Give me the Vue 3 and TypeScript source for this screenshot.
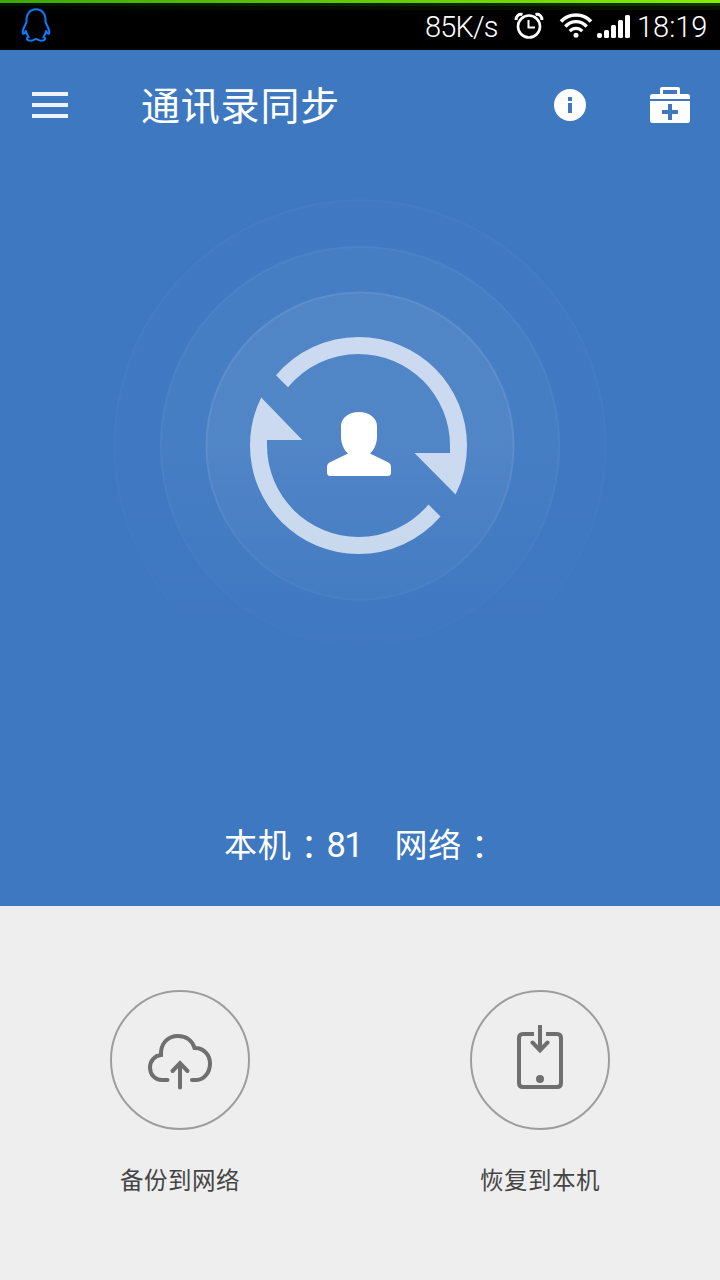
<script setup lang="ts">
interface Action {
  id: 'backup' | 'restore'
  label: string
}

const actions: Action[] = [
  { id: 'backup', label: '备份到网络' },
  { id: 'restore', label: '恢复到本机' },
]

const localCount = 81
</script>

<template>
  <div class="screen">
    <div class="statusbar">
      <svg class="penguin" width="30" height="34" viewBox="0 0 30 34">
        <path d="M5.500 13.500C5 6 9 1.200 15 1.200s10 4.800 9.500 12.300c.3 2 1.500 3.500 2.500 6c1.500 3.500 1.700 6 .8 6.300c-.9 .2-2-1.500-2.800-3.300c0 2.500-1 4.500-2.500 6.500c3 1.500 1.800 3.700-2.500 3.700c-2.500 0-3.500-1.700-5-1.700s-2.500 1.700-5 1.700c-4.300 0-5.500-2.200-2.500-3.700C6 27 5 25 5 22.500C4.200 24.300 3.100 26 2.200 25.800C1.300 25.500 1.500 23 3 19.500C4 17 5.200 15.500 5.500 13.500z" />
      </svg>
      <span class="speed">85K/s</span>
      <svg class="status-icons" width="117" height="28" viewBox="0 0 117 28">
        <g fill="none" stroke="#fff">
          <circle cx="15" cy="14.500" r="11" stroke-width="2.600" />
          <path d="M2 8C2 4 5 1.500 8.500 2.500M28 8C28 4 25 1.500 21.500 2.500" stroke-width="3" />
          <path d="M14.500 8v7.500h6.500" stroke-width="2" />
          <path d="M47 9.500C55 .8 69 .8 77 9.500" stroke-width="3.700" />
          <path d="M51.300 14.500C57.500 8 66.500 8 72.700 14.500" stroke-width="3.400" />
          <path d="M55.700 19.200C59.500 15.300 64.500 15.300 68.300 19.200" stroke-width="3.200" />
        </g>
        <g fill="#fff">
          <circle cx="62" cy="23.300" r="2.500" />
          <rect x="83" y="21" width="5" height="5" rx="2" />
          <rect x="90" y="18" width="5" height="8" rx="1.500" />
          <rect x="97" y="13" width="5" height="13" rx="1.500" />
          <rect x="104" y="8" width="5" height="18" rx="1.500" />
          <rect x="111" y="3" width="5" height="23" rx="1.500" />
        </g>
      </svg>
      <span class="time">18:19</span>
    </div>

    <main class="hero">
      <header class="toolbar">
        <div class="menu"><i /><i /><i /></div>
        <h1>通讯录同步</h1>
        <svg class="info" width="32" height="32" viewBox="0 0 32 32">
          <circle cx="16" cy="16" r="16" fill="#fff" />
          <path d="M14 8h4v4h-4zM14 14h4v10h-4z" fill="#3e78c1" />
        </svg>
        <svg class="kit" width="40" height="36" viewBox="0 0 40 36">
          <path d="M0 12V9.500Q0 7 2.500 7H10V2Q10 0 12 0H28Q30 0 30 2V7H37.500Q40 7 40 9.500V12zM13 3V7H27V3z" fill="#fff" fill-rule="evenodd" />
          <path d="M0 14H40V33.500Q40 36 37.500 36H2.500Q0 36 0 33.500zM18 17V23H12V27H18V33H22V27H28V23H22V17z" fill="#fff" fill-rule="evenodd" />
        </svg>
      </header>

      <svg class="sync" width="720" height="500" viewBox="0 196 720 500">
        <defs>
          <linearGradient id="fade" x1="0" y1="200" x2="0" y2="692" gradientUnits="userSpaceOnUse">
            <stop offset="0" stop-color="#fff" />
            <stop offset=".5" stop-color="#fff" />
            <stop offset=".82" stop-color="#fff" stop-opacity=".3" />
            <stop offset=".95" stop-color="#fff" stop-opacity="0" />
          </linearGradient>
          <linearGradient id="arrow" x1="0" y1="337" x2="0" y2="554" gradientUnits="userSpaceOnUse">
            <stop offset=".6" stop-color="#cbdaf0" />
            <stop offset="1" stop-color="#c8d9ed" />
          </linearGradient>
        </defs>
        <g fill="url(#fade)">
          <circle cx="360" cy="446" r="246.500" fill-opacity=".012" />
          <circle cx="360" cy="446" r="200" fill-opacity=".03" />
          <circle cx="360" cy="446" r="154.500" fill-opacity=".06" />
        </g>
        <g fill="none" stroke="url(#fade)" stroke-width="2">
          <circle cx="360" cy="446" r="245.500" stroke-opacity=".02" />
          <circle cx="360" cy="446" r="199" stroke-opacity=".035" />
          <circle cx="360" cy="446" r="153.500" stroke-opacity=".07" />
        </g>
        <g fill="url(#arrow)">
          <path d="M276 375.300A108.500 108.500 0 0 1 358.500 337A108.500 108.500 0 0 1 467 445.500A108.500 108.500 0 0 1 455.600 494.500L414.500 453H450V445.500A91.500 91.500 0 0 0 358.500 354A91.500 91.500 0 0 0 288 387.300z" />
          <path d="M440.500 516.500A108.500 108.500 0 0 1 358.500 554A108.500 108.500 0 0 1 250 445.500A108.500 108.500 0 0 1 261.200 397.500L302.300 440H267V445.500A91.500 91.500 0 0 0 358.500 537A91.500 91.500 0 0 0 428.500 504.500z" />
        </g>
        <path d="M341 426C341 418 349 412 359 412s18 6 18 14v10.500C377 444 374 450 370 453.500L388.500 462.500Q391 464 391 466.500V472.500Q391 476 387.500 476H330.500Q327 476 327 472.500V466.500Q327 464 329.500 462.500L348 453.500C344 450 341 444 341 436.500z" fill="#fff" />
      </svg>

      <div class="counts">
        <span>本机<b>：</b></span><span class="num">{{ localCount }}</span><span class="net">网络<b>：</b></span>
      </div>
    </main>

    <footer class="actions">
      <div v-for="action in actions" :key="action.id" class="action">
        <div class="disc">
          <svg v-if="action.id === 'backup'" width="70" height="70" viewBox="145 1025 70 70">
            <path d="M167.500 1080H162C155 1080 150 1074.500 150 1067.500C150 1060.500 155 1055.500 161 1055C160.500 1043 168 1036 178 1036C186.500 1036 192.500 1041 194.500 1048C203.500 1047.500 210 1055 210 1063.500C210 1073 203.500 1080 196.500 1080H192" />
            <path d="M180 1087.500V1063.500M172.500 1071L180 1063.200L187.500 1071" />
          </svg>
          <svg v-else width="70" height="70" viewBox="505 1025 70 70">
            <path class="butt" d="M534 1034H523Q519 1034 519 1038V1083Q519 1087 523 1087H557Q561 1087 561 1083V1038Q561 1034 557 1034H546" />
            <path d="M540 1026V1050M532.500 1042.500L540 1050.300L547.500 1042.500" />
            <circle cx="540" cy="1079" r="4" />
          </svg>
        </div>
        <span class="label">{{ action.label }}</span>
      </div>
    </footer>
  </div>
</template>

<style>
html,
body {
  margin: 0;
  overflow: hidden;
}
</style>

<style scoped>
.screen {
  width: 720px;
  height: 1280px;
  display: flex;
  flex-direction: column;
  background: #eee;
  font-family: 'Noto Sans CJK SC', sans-serif;
}
.statusbar {
  height: 50px;
  box-sizing: border-box;
  display: flex;
  align-items: flex-start;
  color: #fff;
  background:
    linear-gradient(90deg, #3ba80a, #84ee08) 0 0 / 100% 3px no-repeat,
    linear-gradient(90deg, #041200, #163300) 0 3px / 100% 3px no-repeat,
    linear-gradient(90deg, #020700, #091500) 0 6px / 100% 4px no-repeat,
    #000;
  font: 300 29px/34px Roboto, sans-serif;
}
.penguin {
  margin: 8px 0 0 21px;
  fill: none;
  stroke: #087cff;
  stroke-width: 2;
}
.speed {
  width: 89px;
  margin: 10px 0 0 374px;
  letter-spacing: -0.8px;
}
.status-icons {
  margin-top: 12px;
}
.time {
  margin: 10px 0 0 6px;
}
.hero {
  height: 856px;
  background: #3e78c1;
  color: #fff;
}
.toolbar {
  height: 110px;
  display: flex;
  align-items: center;
}
.menu {
  width: 36px;
  margin-left: 32px;
  display: grid;
  gap: 7px;
}
.menu i {
  height: 4px;
  background: #edf3fb;
}
h1 {
  width: 413px;
  margin: -4px 0 0 73px;
  font-size: 39px;
  line-height: 60px;
  font-weight: 400;
  letter-spacing: 0.8px;
}
.kit {
  margin-left: 64px;
}
.sync {
  display: block;
  margin-top: 36px;
}
.counts {
  display: flex;
  margin: 122px 0 0 224px;
  font-size: 33px;
  line-height: 50px;
  letter-spacing: 0.8px;
}
.counts b {
  display: inline-block;
  font-family: 'Noto Sans CJK JP', sans-serif;
  font-weight: 400;
  line-height: 1;
  transform: translate(1px, 2px);
}
.num {
  width: 68px;
  margin-left: 1px;
  font-family: Roboto, sans-serif;
  font-size: 34.5px;
  line-height: 54px;
  letter-spacing: -1.5px;
}
.actions {
  flex: 1;
  display: flex;
}
.action {
  width: 360px;
  padding-top: 84px;
  display: flex;
  flex-direction: column;
  align-items: center;
}
.disc {
  width: 140px;
  height: 140px;
  box-sizing: border-box;
  border: 2px solid #9d9d9d;
  border-radius: 50%;
  display: flex;
  justify-content: center;
  align-items: center;
}
.disc svg {
  fill: none;
  stroke: #6f6f6f;
  stroke-width: 4;
  stroke-linecap: round;
}
.disc .butt {
  stroke-linecap: butt;
}
.disc circle {
  fill: #6f6f6f;
  stroke: none;
}
.label {
  margin-top: 31px;
  color: #444;
  font-size: 23.5px;
  line-height: 36px;
  letter-spacing: 0.5px;
}
</style>
